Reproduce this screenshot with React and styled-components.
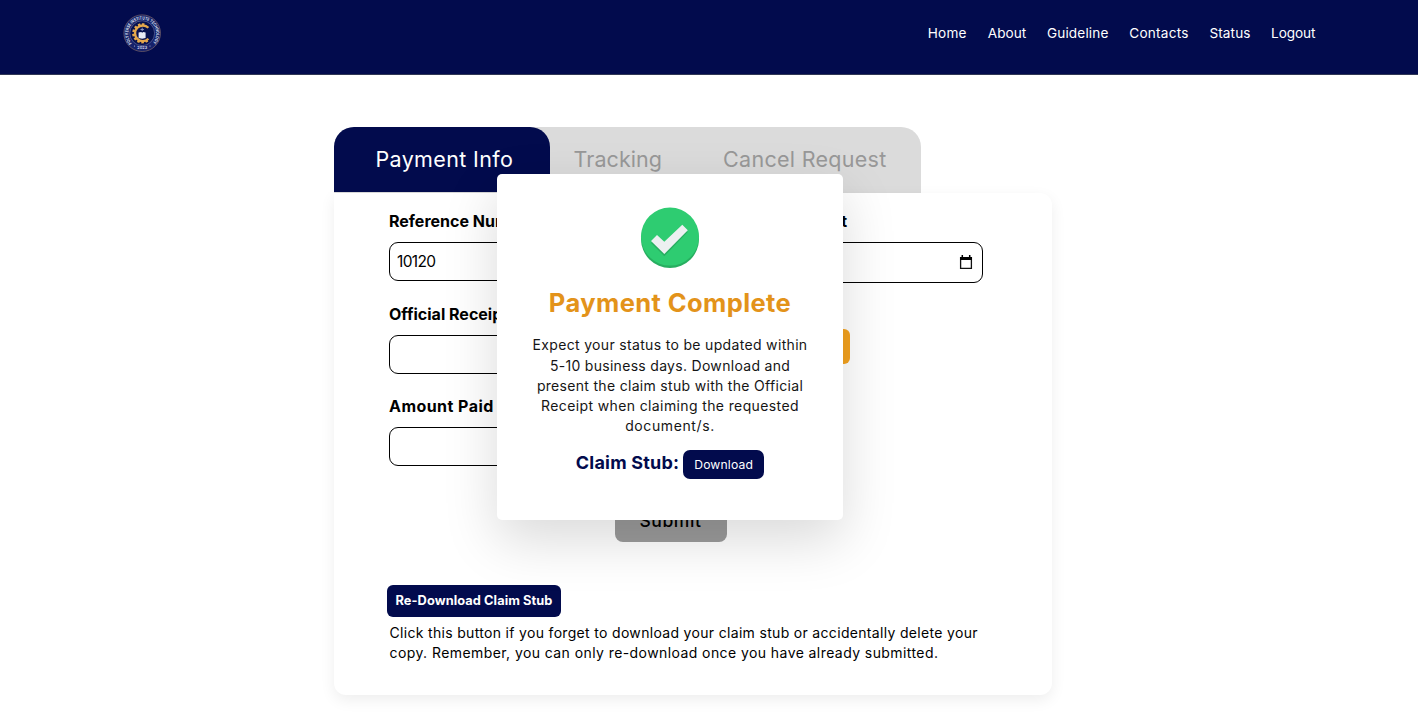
import React from "react";
import styled, { createGlobalStyle } from "styled-components";

const Global = createGlobalStyle`
  * { box-sizing: border-box; }
  body { margin: 0; background: #fff; overflow: hidden; font-family: Inter, "Liberation Sans", sans-serif; color: #000; }
  button, input { font-family: inherit; }
`;

const Page = styled.div`
  position: relative;
  height: 716px;
  overflow: hidden;
`;

const Header = styled.header`
  display: flex;
  justify-content: space-between;
  height: 75px;
  padding: 13px 102.5px 0 122px;
  background: #020b4d;
  border-bottom: 1px solid #303755;
`;

const Nav = styled.nav`
  display: flex;
  gap: 20.5px;
  height: 40px;
  align-items: center;
`;

const NavLink = styled.a`
  width: ${(p) => p.$w}px;
  display: flex;
  justify-content: center;
  white-space: nowrap;
  color: #fff;
  font-size: 13.6px;
  letter-spacing: ${(p) => p.$ls || 0}px;
`;

const Main = styled.main`
  width: 718px;
  margin: 52px 0 0 333.5px;
`;

const Tabs = styled.div`
  display: flex;
  width: 587.5px;
  height: 66px;
  background: #dbdbdb;
  border-radius: 20px 20px 0 0;
`;

const Tab = styled.div`
  width: ${(p) => p.$w}px;
  height: 65px;
  padding-left: ${(p) => p.$pad}px;
  line-height: 65px;
  white-space: nowrap;
  font-size: 21.5px;
  letter-spacing: ${(p) => p.$ls}px;
  color: ${(p) => (p.$active ? "#fff" : "#989898")};
  background: ${(p) => (p.$active ? "#020b4d" : "transparent")};
  border-radius: 20px 20px 0 0;
`;

const Card = styled.section`
  height: 502px;
  padding: 16px 68.5px 0 55.5px;
  border-radius: 0 12px 12px 12px;
  background: #fff;
  box-shadow: 0 5px 15px rgba(0, 0, 0, 0.07);
`;

const Columns = styled.div`
  display: flex;
  justify-content: space-between;
  height: 293px;
`;

const Column = styled.div`
  width: ${(p) => p.$w}px;
  display: flex;
  flex-direction: column;
  align-items: flex-start;
`;

const Label = styled.label`
  height: 24px;
  margin-bottom: 9px;
  line-height: 24px;
  font-size: 16px;
  font-weight: 700;
  white-space: nowrap;
  letter-spacing: ${(p) => p.$ls || 0}px;
`;

const Field = styled.div`
  display: flex;
  align-items: center;
  width: 100%;
  height: ${(p) => p.$h || 39}px;
  margin-bottom: 20.7px;
  padding: 0 7px;
  border: 1.3px solid #000;
  border-radius: 9px;
  font-size: 15.5px;
  letter-spacing: -0.65px;
  justify-content: ${(p) => (p.$end ? "flex-end" : "flex-start")};
`;

const Calendar = styled.svg`
  width: 14px;
  height: 15px;
  margin-right: 2px;
`;

const Upload = styled.button`
  width: 131px;
  height: 35px;
  margin-top: 25px;
  border: 0;
  border-radius: 6px;
  background: #f5a31f;
`;

const Submit = styled.button`
  display: block;
  width: 112px;
  height: 40px;
  margin: 0 0 0 225.5px;
  padding: 0 0 3px;
  border: 0;
  border-radius: 8px;
  background: #9b9b9b;
  color: #000;
  font-size: 17.5px;
  font-weight: 500;
  letter-spacing: 0.6px;
`;

const Redownload = styled.button`
  display: block;
  width: 174px;
  height: 32px;
  margin: 43px 0 0 -2px;
  padding: 0 0 2px;
  border: 0;
  border-radius: 6px;
  background: #020b4d;
  color: #fff;
  font-size: 12.8px;
  font-weight: 700;
  white-space: nowrap;
  letter-spacing: 0.08px;
`;

const Note = styled.p`
  margin: 6px 0 0 0.5px;
  font-size: 14px;
  line-height: 20.3px;
`;

const Line = styled.span`
  display: block;
  white-space: nowrap;
  letter-spacing: ${(p) => p.$ls || 0}px;
`;

const Modal = styled.div`
  position: absolute;
  left: 497px;
  top: 174px;
  width: 346px;
  height: 346px;
  padding-top: 33px;
  display: flex;
  flex-direction: column;
  align-items: center;
  border-radius: 5px;
  background: #fff;
  box-shadow: 0 20px 54px rgba(0, 0, 0, 0.15);
`;

const Title = styled.h2`
  margin: 14px 0 0;
  height: 40px;
  line-height: 40px;
  font-size: 25.5px;
  font-weight: 700;
  color: #e3931a;
  white-space: nowrap;
  letter-spacing: 0.4px;
`;

const Message = styled.p`
  margin: 12.4px 0 0;
  font-size: 14px;
  line-height: 20.2px;
  text-align: center;
  color: #151515;
`;

const Claim = styled.div`
  display: flex;
  gap: 4px;
  margin-top: 13.6px;
`;

const ClaimLabel = styled.span`
  height: 26px;
  line-height: 26px;
  font-size: 18px;
  font-weight: 700;
  color: #020b4d;
  white-space: nowrap;
  letter-spacing: 0.2px;
`;

const Download = styled.button`
  width: 81px;
  height: 29px;
  padding: 0;
  border: 0;
  border-radius: 7px;
  background: #020b4d;
  color: #fff;
  font-size: 12.2px;
  letter-spacing: 0.15px;
`;

const teeth = [-45, -72, -99, -126, -153, -180, -207, -234, -20];

function Logo() {
  return (
    <svg width="40" height="40" viewBox="0 0 40 40">
      <defs>
        <path id="ring" d="M10 30.2A14 14 0 1 1 30.4 30.2" />
      </defs>
      <circle cx="20.2" cy="20.2" r="18.3" fill="#16226b" stroke="#6d5a66" strokeWidth="0.8" />
      <circle cx="20.2" cy="20.2" r="12.4" fill="#06104f" stroke="#6f78ab" strokeWidth="0.6" />
      <text fill="#dfe1ef" fontSize="4.4" fontWeight="700" textLength="64" lengthAdjust="spacingAndGlyphs">
        <textPath href="#ring">POLYVERSE INSTITUTE TECHNOLOGY</textPath>
      </text>
      <text x="20.2" y="36" fill="#d0d3e8" fontSize="3.8" fontWeight="700" textAnchor="middle">2023</text>
      <circle cx="12.5" cy="33" r="0.6" fill="#b8bddb" />
      <circle cx="28" cy="33" r="0.6" fill="#b8bddb" />
      <path d="M26.4 14.8A7.8 7.8 0 1 0 26.4 25.8" fill="none" stroke="#e3a74c" strokeWidth="2.3" />
      {teeth.map((a) => (
        <rect key={a} x="19" y="10.2" width="2.6" height="2.6" fill="#e3a74c" transform={`rotate(${a + 25} 20.3 20.3)`} />
      ))}
      <path d="M16.6 19.6l2.6-.6 1 .8 1-.8 2.4.6v5.4l-3.4.7-3.6-.7z" fill="#e7eaf5" />
      <path d="M20.2 14.6v3.4m-1.7-1.5h3.4" stroke="#8992bd" strokeWidth="1" />
    </svg>
  );
}

function Check() {
  return (
    <svg width="60" height="62" viewBox="0 0 60 62">
      <circle cx="30" cy="32" r="29" fill="#27ae60" />
      <circle cx="30" cy="29.6" r="29" fill="#2ecc71" />
      <path d="M11 36l6-6 7.3 7 18-17 5.4 5-23.4 24.2z" fill="#27ae60" />
      <path d="M11 34.1l6-6.1 7.3 6.7L42.3 17.8l5.5 5.5-23.5 23.6z" fill="#ecf0f1" />
    </svg>
  );
}

const links = [
  ["Home", 39.5, 0.25],
  ["About", 39, 0],
  ["Guideline", 61.5, 0.15],
  ["Contacts", 60, 0.25],
  ["Status", 41, 0.1],
  ["Logout", 44.5, -0.08],
];

export default function App() {
  return (
    <Page>
      <Global />
      <Header>
        <Logo />
        <Nav>
          {links.map(([name, w, ls]) => (
            <NavLink key={name} $w={w} $ls={ls}>{name}</NavLink>
          ))}
        </Nav>
      </Header>
      <Main>
        <Tabs>
          <Tab $active $w={216.5} $pad={42} $ls={0.35}>Payment Info</Tab>
          <Tab $w={149} $pad={23.5} $ls={0.07}>Tracking</Tab>
          <Tab $w={222} $pad={24} $ls={0.3}>Cancel Request</Tab>
        </Tabs>
        <Card>
          <Columns>
            <Column $w={275}>
              <Label>Reference Number</Label>
              <Field>10120</Field>
              <Label>Official Receipt Number</Label>
              <Field />
              <Label $ls={0.45}>Amount Paid</Label>
              <Field />
            </Column>
            <Column $w={264.5}>
              <Label>Date of Payment</Label>
              <Field $h={41} $end>
                <Calendar viewBox="0 0 14 15">
                  <path d="M3.3 0v2M10.7 0v2" stroke="#000" strokeWidth="1.5" />
                  <path d="M1.6 4.5V13.4H12.4V2.6H1.6z" fill="none" stroke="#111" strokeWidth="1.3" />
                  <path d="M1 2h12v3H1z" />
                </Calendar>
              </Field>
              <Upload aria-label="Upload" />
            </Column>
          </Columns>
          <Submit>Submit</Submit>
          <Redownload>Re-Download Claim Stub</Redownload>
          <Note>
            <Line $ls={0.32}>Click this button if you forget to download your claim stub or accidentally delete your</Line>
            <Line $ls={0.42}>copy. Remember, you can only re-download once you have already submitted.</Line>
          </Note>
        </Card>
      </Main>
      <Modal>
        <Check />
        <Title>Payment Complete</Title>
        <Message>
          <Line $ls={0.33}>Expect your status to be updated within</Line>
          <Line $ls={0.3}>5-10 business days. Download and</Line>
          <Line $ls={0.31}>present the claim stub with the Official</Line>
          <Line $ls={0.38}>Receipt when claiming the requested</Line>
          <Line $ls={0.6}>document/s.</Line>
        </Message>
        <Claim>
          <ClaimLabel>Claim Stub:</ClaimLabel>
          <Download>Download</Download>
        </Claim>
      </Modal>
    </Page>
  );
}
